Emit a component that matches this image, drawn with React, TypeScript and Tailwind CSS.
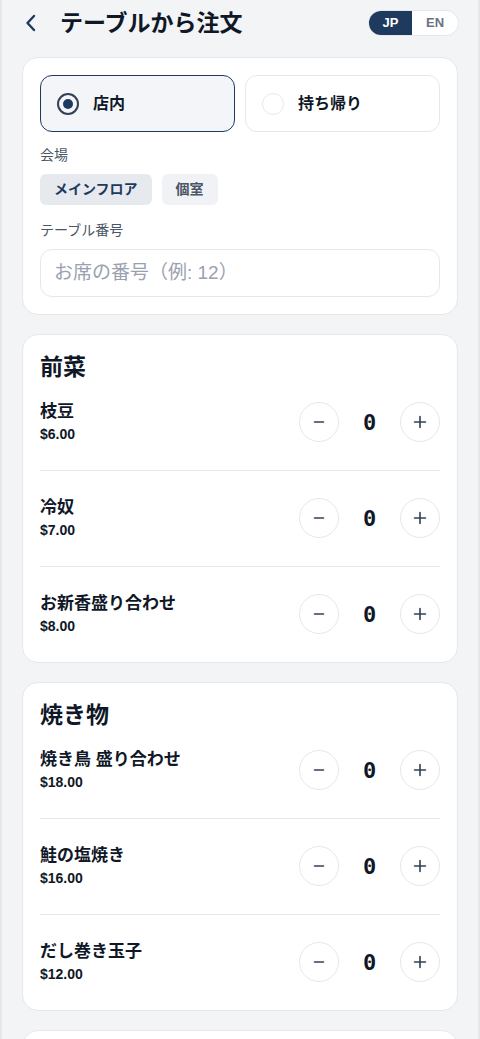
import { useState } from "react";

const font = { fontFamily: '"Liberation Sans", "Noto Sans CJK JP", sans-serif' };

type Item = { name: string; price: string };

const sections: { title: string; items: Item[] }[] = [
  {
    title: "前菜",
    items: [
      { name: "枝豆", price: "$6.00" },
      { name: "冷奴", price: "$7.00" },
      { name: "お新香盛り合わせ", price: "$8.00" },
    ],
  },
  {
    title: "焼き物",
    items: [
      { name: "焼き鳥 盛り合わせ", price: "$18.00" },
      { name: "鮭の塩焼き", price: "$16.00" },
      { name: "だし巻き玉子", price: "$12.00" },
    ],
  },
  {
    title: "揚げ物",
    items: [{ name: "唐揚げ", price: "$10.00" }],
  },
];

function Stepper() {
  return (
    <div className="flex items-center">
      <button className="flex h-10 w-10 items-center justify-center rounded-full border border-gray-200 bg-white text-slate-700">
        <svg width="14" height="14" viewBox="0 0 14 14" fill="none" stroke="currentColor" strokeWidth="1.6" strokeLinecap="round">
          <path d="M2.5 7h9" />
        </svg>
      </button>
      <span className="w-[61px] text-center text-[22px] font-bold text-gray-900" style={{ fontFamily: '"DejaVu Sans Mono", monospace' }}>
        0
      </span>
      <button className="flex h-10 w-10 items-center justify-center rounded-full border border-gray-200 bg-white text-slate-700">
        <svg width="14" height="14" viewBox="0 0 14 14" fill="none" stroke="currentColor" strokeWidth="1.6" strokeLinecap="round">
          <path d="M1.5 7h11M7 1.5v11" />
        </svg>
      </button>
    </div>
  );
}

function Radio({ label, active, onClick }: { label: string; active: boolean; onClick: () => void }) {
  return (
    <button
      onClick={onClick}
      className={
        active
          ? "flex h-[57px] flex-1 items-center gap-[14px] rounded-xl border-[1.5px] border-[#1e3a5f] bg-[#f3f5f8] px-4"
          : "flex h-[57px] flex-1 items-center gap-[14px] rounded-xl border border-gray-200 bg-white px-4"
      }
    >
      {active ? (
        <span className="flex h-[22px] w-[22px] items-center justify-center rounded-full border-2 border-[#334155]">
          <span className="h-[10px] w-[10px] rounded-full bg-[#1e3a5f]" />
        </span>
      ) : (
        <span className="h-[22px] w-[22px] rounded-full border border-gray-200 bg-white" />
      )}
      <span className="text-[16px] font-semibold text-gray-900">{label}</span>
    </button>
  );
}

export default function App() {
  const [mode, setMode] = useState("dine");

  return (
    <div className="min-h-screen bg-[#f3f4f6]" style={font}>
      <div className="min-h-screen border-x-2 border-[#e5e7eb] px-5">
        {/* Header */}
        <div className="flex h-[46px] items-center">
          <svg className="ml-[2px] text-[#1e3a5f]" width="14" height="20" viewBox="0 0 14 20" fill="none" stroke="currentColor" strokeWidth="2.4" strokeLinecap="round" strokeLinejoin="round">
            <path d="M10 3 3.5 10 10 17" />
          </svg>
          <h1 className="ml-[22px] text-[23px] font-bold text-gray-900">テーブルから注文</h1>
          <div className="ml-auto mr-[-1px] flex h-[26px] overflow-hidden rounded-full border border-gray-200 bg-white text-[13px] font-bold">
            <span className="flex w-[43px] items-center justify-center bg-[#1e3a5f] text-white">JP</span>
            <span className="flex w-[46px] items-center justify-center text-gray-500">EN</span>
          </div>
        </div>

        <div className="mt-[11px] flex flex-col gap-[19px] pb-6">
          {/* Order type card */}
          <div className="rounded-2xl border border-gray-200 bg-white p-[17px]">
            <div className="flex gap-2.5">
              <Radio label="店内" active={mode === "dine"} onClick={() => setMode("dine")} />
              <Radio label="持ち帰り" active={mode === "take"} onClick={() => setMode("take")} />
            </div>
            <p className="mt-[13px] text-[14px] leading-5 text-gray-600">会場</p>
            <div className="mt-[9px] flex gap-2.5">
              <span className="flex h-[31px] items-center rounded-md bg-[#e6eaef] px-[14px] text-[14px] font-semibold text-[#1e3a5f]">メインフロア</span>
              <span className="flex h-[31px] items-center rounded-md bg-[#f0f2f5] px-[14px] text-[14px] font-semibold text-gray-600">個室</span>
            </div>
            <p className="mt-[15px] text-[14px] leading-5 text-gray-600">テーブル番号</p>
            <input
              className="mt-[9px] h-12 w-full rounded-xl border border-gray-200 bg-white px-[13px] text-[19px] text-gray-900 outline-none [text-spacing-trim:space-all] placeholder:text-gray-400 placeholder:[text-spacing-trim:space-all]"
              placeholder="お席の番号（例: 12）"
            />
          </div>

          {sections.map((s) => (
            <div key={s.title} className="rounded-2xl border border-gray-200 bg-white px-[17px] pt-4">
              <h2 className="text-[23px] font-bold leading-8 text-gray-900">{s.title}</h2>
              <div>
                {s.items.map((it) => (
                  <div
                    key={it.name}
                    className="flex items-center justify-between border-b border-gray-200 py-[25.5px] first:pt-[17px] last:border-b-0 last:pb-[26px]"
                  >
                    <div>
                      <p className="text-[17px] font-semibold leading-6 text-gray-900">{it.name}</p>
                      <p className="text-[14px] font-bold leading-5 text-gray-900">{it.price}</p>
                    </div>
                    <Stepper />
                  </div>
                ))}
              </div>
            </div>
          ))}
        </div>
      </div>
    </div>
  );
}
